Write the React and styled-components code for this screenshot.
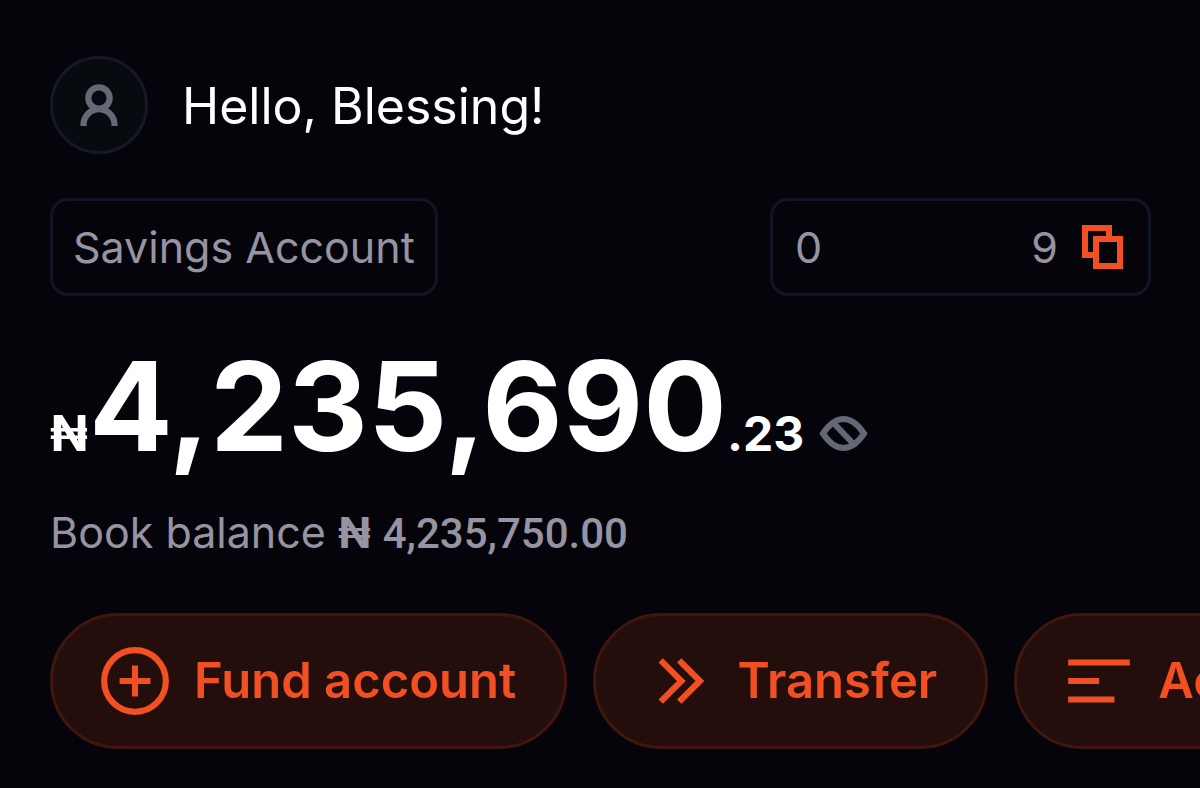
import React from 'react';
import styled, { createGlobalStyle } from 'styled-components';

const GlobalStyle = createGlobalStyle`
  * {
    box-sizing: border-box;
  }

  body {
    margin: 0;
    background: #06040b;
    color: #ffffff;
    font-family: Inter, sans-serif;
    overflow-x: hidden;
  }
`;

const Page = styled.main`
  display: flex;
  flex-direction: column;
  padding: 56px 49px 39px 50px;
`;

const Header = styled.header`
  display: flex;
  align-items: center;
  gap: 34px;
`;

const Avatar = styled.div`
  display: flex;
  align-items: center;
  justify-content: center;
  width: 98px;
  height: 98px;
  border: 3px solid #151826;
  border-radius: 50%;
  background: #070b10;
`;

const Greeting = styled.h1`
  margin: 0;
  padding-top: 2px;
  font-size: 50px;
  font-weight: 400;
  line-height: 60px;
`;

const AccountRow = styled.section`
  display: flex;
  justify-content: space-between;
  margin-top: 44px;
`;

const AccountBox = styled.div`
  display: flex;
  align-items: center;
  height: 98px;
  padding: 0 20px;
  border: 3px solid #101623;
  border-radius: 18px;
  color: #9694a2;
  font-size: 43px;
  line-height: 52px;
`;

const AccountNumberBox = styled(AccountBox)`
  gap: 24px;
  min-width: 381px;
  padding: 0 25px 0 22px;
`;

const AccountNumber = styled.span`
  display: flex;
  flex: 1;
  justify-content: space-between;
`;

const IconButton = styled.button`
  display: flex;
  padding: 0;
  border: none;
  background: none;
  color: ${(p) => p.$color};
  cursor: pointer;
`;

const Balance = styled.section`
  display: flex;
  align-items: baseline;
  margin-top: 50px;
  font-weight: 700;
  line-height: 120px;
`;

const BalanceSmall = styled.span`
  font-size: ${(p) => p.$size}px;
  line-height: 52px;
`;

const BalanceMain = styled.span`
  margin-left: 1px;
  font-size: 124px;
`;

const EyeButton = styled(IconButton)`
  margin-left: 15px;
`;

const BookBalance = styled.p`
  margin: 40px 0 0;
  color: #9694a2;
  font-size: 43px;
  line-height: 52px;
  white-space: nowrap;
`;

const BookCurrency = styled.span`
  font-weight: 700;
`;

const BookAmount = styled.span`
  font-family: Roboto, sans-serif;
  font-size: 42px;
  font-weight: 500;
`;

const Actions = styled.nav`
  display: flex;
  gap: 26px;
  margin: 53px -49px 0 0;
  overflow: hidden;
`;

const ActionButton = styled.button`
  display: flex;
  flex-shrink: 0;
  align-items: center;
  gap: 22px;
  height: 136px;
  padding: 0 48px 0 45px;
  border: 3px solid #43150f;
  border-radius: 68px;
  background: #230e0c;
  color: #f25022;
  font-family: inherit;
  font-size: 49px;
  font-weight: 600;
  line-height: 60px;
  cursor: pointer;
`;

const UserIcon = () => (
  <svg width="40" height="42" viewBox="0 0 40 42" fill="none" stroke="#656876" strokeWidth="6.2" aria-hidden="true">
    <circle cx="20" cy="14" r="10.7" />
    <path d="M4.500 42v-1.300a15.500 15.500 0 0 1 31 0V42" />
  </svg>
);

const CopyIcon = () => (
  <svg width="41" height="44" viewBox="0 0 41 44" fill="none" stroke="currentColor" strokeWidth="6" aria-hidden="true">
    <path d="M12 30H3V3h24v9" />
    <path d="M14 14h24v27H14z" />
  </svg>
);

const HideIcon = () => (
  <svg width="49" height="36" viewBox="0 0 49 36" fill="none" stroke="currentColor" strokeWidth="6" aria-hidden="true">
    <path d="M4 18.500C9 11 16 4 24.500 4S40 11 45 18.500C40 26 33 33 24.500 33S9 26 4 18.500z" />
    <path d="M15 8.500l19 20" />
  </svg>
);

const PlusCircleIcon = () => (
  <svg width="74" height="74" viewBox="0 0 24 24" fill="none" stroke="currentColor" strokeWidth="2" aria-hidden="true">
    <circle cx="12" cy="12" r="10" />
    <path d="M12 7v10M7 12h10" />
  </svg>
);

const TransferIcon = () => (
  <svg width="74" height="74" viewBox="0 0 24 24" fill="none" stroke="currentColor" strokeWidth="2" aria-hidden="true">
    <path d="M6.400 5.300L13.100 12l-6.700 6.700M12.400 5.300L19.100 12l-6.700 6.700" />
  </svg>
);

const ListIcon = () => (
  <svg width="74" height="74" viewBox="0 0 24 24" fill="none" stroke="currentColor" strokeWidth="2" aria-hidden="true">
    <path d="M2 6h20M2 12h10M2 18h15" />
  </svg>
);

const actions = [
  { label: 'Fund account', Icon: PlusCircleIcon },
  { label: 'Transfer', Icon: TransferIcon },
  { label: 'Activity', Icon: ListIcon },
];

const App = () => {
  return (
    <>
      <GlobalStyle />
      <Page>
        <Header>
          <Avatar>
            <UserIcon />
          </Avatar>
          <Greeting>Hello, Blessing!</Greeting>
        </Header>

        <AccountRow>
          <AccountBox>Savings Account</AccountBox>
          <AccountNumberBox>
            <AccountNumber>
              <span>0</span>
              <span>9</span>
            </AccountNumber>
            <IconButton type="button" $color="#f25022" aria-label="Copy account number">
              <CopyIcon />
            </IconButton>
          </AccountNumberBox>
        </AccountRow>

        <Balance>
          <BalanceSmall $size={50}>₦</BalanceSmall>
          <BalanceMain>4,235,690</BalanceMain>
          <BalanceSmall $size={48}>.23</BalanceSmall>
          <EyeButton type="button" $color="#626875" aria-label="Hide balance">
            <HideIcon />
          </EyeButton>
        </Balance>

        <BookBalance>
          Book balance <BookCurrency>₦</BookCurrency> <BookAmount>4,235,750.00</BookAmount>
        </BookBalance>

        <Actions>
          {actions.map(({ label, Icon }) => (
            <ActionButton key={label} type="button">
              <Icon />
              {label}
            </ActionButton>
          ))}
        </Actions>
      </Page>
    </>
  );
};

export default App;
